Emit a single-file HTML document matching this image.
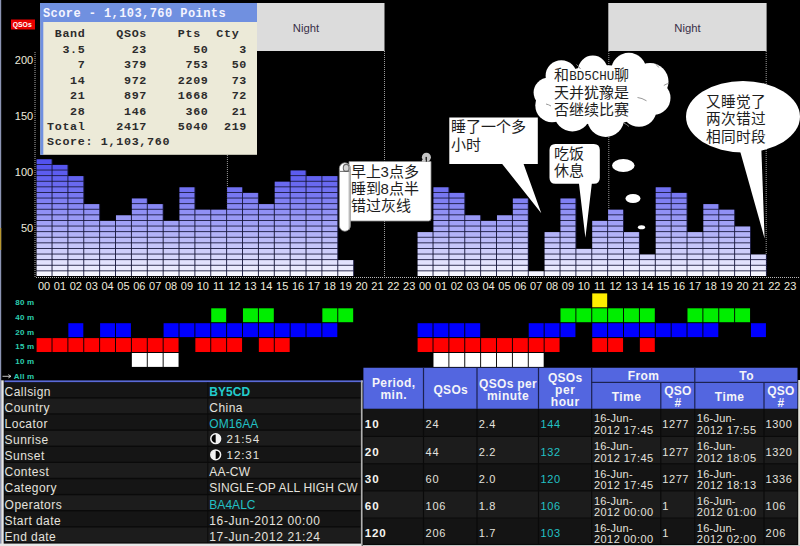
<!DOCTYPE html><html lang="zh-CN"><head><meta charset="utf-8"><style>
html,body{margin:0;padding:0;background:#000;width:800px;height:546px;overflow:hidden}
svg{position:absolute;left:0;top:0;display:block}
text{font-family:"Liberation Sans",sans-serif}
.mono{font-family:"Liberation Mono",monospace}
</style></head><body>
<svg width="800" height="546" viewBox="0 0 800 546">
<rect x="0" y="0" width="800" height="546" fill="#000"/>
<rect x="0" y="0" width="1.2" height="546" fill="#8c94b4"/>
<rect x="0" y="228" width="1.2" height="22" fill="#b89830"/>
<rect x="227" y="3" width="157.5" height="48" fill="#dcdcdc"/>
<rect x="608.3" y="3" width="158.3" height="48" fill="#dcdcdc"/>
<text x="306" y="31.8" font-size="11.3" fill="#3a3048" text-anchor="middle">Night</text>
<text x="687.5" y="31.8" font-size="11.3" fill="#3a3048" text-anchor="middle">Night</text>
<line x1="227.4" y1="51" x2="227.4" y2="277" stroke="#9a9a9a" stroke-width="1" stroke-dasharray="1 1"/>
<line x1="384.5" y1="51" x2="384.5" y2="277" stroke="#9a9a9a" stroke-width="1" stroke-dasharray="1 1"/>
<line x1="608.8" y1="51" x2="608.8" y2="277" stroke="#9a9a9a" stroke-width="1" stroke-dasharray="1 1"/>
<line x1="766.2" y1="51" x2="766.2" y2="277" stroke="#9a9a9a" stroke-width="1" stroke-dasharray="1 1"/>
<rect x="36.60" y="159.30" width="15.88" height="116.70" fill="#1a1a40"/>
<rect x="36.60" y="271.30" width="14.95" height="4.7" fill="#f4f4ff"/>
<rect x="36.60" y="265.70" width="14.95" height="4.7" fill="#eaeafe"/>
<rect x="36.60" y="260.10" width="14.95" height="4.7" fill="#e1e1fd"/>
<rect x="36.60" y="254.50" width="14.95" height="4.7" fill="#d7d7fc"/>
<rect x="36.60" y="248.90" width="14.95" height="4.7" fill="#cecefb"/>
<rect x="36.60" y="243.30" width="14.95" height="4.7" fill="#c5c5fa"/>
<rect x="36.60" y="237.70" width="14.95" height="4.7" fill="#bcbcf9"/>
<rect x="36.60" y="232.10" width="14.95" height="4.7" fill="#b3b3f8"/>
<rect x="36.60" y="226.50" width="14.95" height="4.7" fill="#aaaaf7"/>
<rect x="36.60" y="220.90" width="14.95" height="4.7" fill="#a1a1f6"/>
<rect x="36.60" y="215.30" width="14.95" height="4.7" fill="#9999f5"/>
<rect x="36.60" y="209.70" width="14.95" height="4.7" fill="#9090f5"/>
<rect x="36.60" y="204.10" width="14.95" height="4.7" fill="#8888f4"/>
<rect x="36.60" y="198.50" width="14.95" height="4.7" fill="#8080f3"/>
<rect x="36.60" y="192.90" width="14.95" height="4.7" fill="#7878f2"/>
<rect x="36.60" y="187.30" width="14.95" height="4.7" fill="#7171f1"/>
<rect x="36.60" y="181.70" width="14.95" height="4.7" fill="#6969f0"/>
<rect x="36.60" y="176.10" width="14.95" height="4.7" fill="#6363f0"/>
<rect x="36.60" y="170.50" width="14.95" height="4.7" fill="#5c5cef"/>
<rect x="36.60" y="164.90" width="14.95" height="4.7" fill="#5656ee"/>
<rect x="36.60" y="159.30" width="14.95" height="4.7" fill="#5252ee"/>
<rect x="52.48" y="164.90" width="15.88" height="111.10" fill="#1a1a40"/>
<rect x="52.48" y="271.30" width="14.95" height="4.7" fill="#f4f4ff"/>
<rect x="52.48" y="265.70" width="14.95" height="4.7" fill="#eaeafe"/>
<rect x="52.48" y="260.10" width="14.95" height="4.7" fill="#e1e1fd"/>
<rect x="52.48" y="254.50" width="14.95" height="4.7" fill="#d7d7fc"/>
<rect x="52.48" y="248.90" width="14.95" height="4.7" fill="#cecefb"/>
<rect x="52.48" y="243.30" width="14.95" height="4.7" fill="#c5c5fa"/>
<rect x="52.48" y="237.70" width="14.95" height="4.7" fill="#bcbcf9"/>
<rect x="52.48" y="232.10" width="14.95" height="4.7" fill="#b3b3f8"/>
<rect x="52.48" y="226.50" width="14.95" height="4.7" fill="#aaaaf7"/>
<rect x="52.48" y="220.90" width="14.95" height="4.7" fill="#a1a1f6"/>
<rect x="52.48" y="215.30" width="14.95" height="4.7" fill="#9999f5"/>
<rect x="52.48" y="209.70" width="14.95" height="4.7" fill="#9090f5"/>
<rect x="52.48" y="204.10" width="14.95" height="4.7" fill="#8888f4"/>
<rect x="52.48" y="198.50" width="14.95" height="4.7" fill="#8080f3"/>
<rect x="52.48" y="192.90" width="14.95" height="4.7" fill="#7878f2"/>
<rect x="52.48" y="187.30" width="14.95" height="4.7" fill="#7171f1"/>
<rect x="52.48" y="181.70" width="14.95" height="4.7" fill="#6969f0"/>
<rect x="52.48" y="176.10" width="14.95" height="4.7" fill="#6363f0"/>
<rect x="52.48" y="170.50" width="14.95" height="4.7" fill="#5c5cef"/>
<rect x="52.48" y="164.90" width="14.95" height="4.7" fill="#5656ee"/>
<rect x="68.35" y="176.10" width="15.88" height="99.90" fill="#1a1a40"/>
<rect x="68.35" y="271.30" width="14.95" height="4.7" fill="#f4f4ff"/>
<rect x="68.35" y="265.70" width="14.95" height="4.7" fill="#eaeafe"/>
<rect x="68.35" y="260.10" width="14.95" height="4.7" fill="#e1e1fd"/>
<rect x="68.35" y="254.50" width="14.95" height="4.7" fill="#d7d7fc"/>
<rect x="68.35" y="248.90" width="14.95" height="4.7" fill="#cecefb"/>
<rect x="68.35" y="243.30" width="14.95" height="4.7" fill="#c5c5fa"/>
<rect x="68.35" y="237.70" width="14.95" height="4.7" fill="#bcbcf9"/>
<rect x="68.35" y="232.10" width="14.95" height="4.7" fill="#b3b3f8"/>
<rect x="68.35" y="226.50" width="14.95" height="4.7" fill="#aaaaf7"/>
<rect x="68.35" y="220.90" width="14.95" height="4.7" fill="#a1a1f6"/>
<rect x="68.35" y="215.30" width="14.95" height="4.7" fill="#9999f5"/>
<rect x="68.35" y="209.70" width="14.95" height="4.7" fill="#9090f5"/>
<rect x="68.35" y="204.10" width="14.95" height="4.7" fill="#8888f4"/>
<rect x="68.35" y="198.50" width="14.95" height="4.7" fill="#8080f3"/>
<rect x="68.35" y="192.90" width="14.95" height="4.7" fill="#7878f2"/>
<rect x="68.35" y="187.30" width="14.95" height="4.7" fill="#7171f1"/>
<rect x="68.35" y="181.70" width="14.95" height="4.7" fill="#6969f0"/>
<rect x="68.35" y="176.10" width="14.95" height="4.7" fill="#6363f0"/>
<rect x="84.22" y="204.10" width="15.88" height="71.90" fill="#1a1a40"/>
<rect x="84.22" y="271.30" width="14.95" height="4.7" fill="#f4f4ff"/>
<rect x="84.22" y="265.70" width="14.95" height="4.7" fill="#eaeafe"/>
<rect x="84.22" y="260.10" width="14.95" height="4.7" fill="#e1e1fd"/>
<rect x="84.22" y="254.50" width="14.95" height="4.7" fill="#d7d7fc"/>
<rect x="84.22" y="248.90" width="14.95" height="4.7" fill="#cecefb"/>
<rect x="84.22" y="243.30" width="14.95" height="4.7" fill="#c5c5fa"/>
<rect x="84.22" y="237.70" width="14.95" height="4.7" fill="#bcbcf9"/>
<rect x="84.22" y="232.10" width="14.95" height="4.7" fill="#b3b3f8"/>
<rect x="84.22" y="226.50" width="14.95" height="4.7" fill="#aaaaf7"/>
<rect x="84.22" y="220.90" width="14.95" height="4.7" fill="#a1a1f6"/>
<rect x="84.22" y="215.30" width="14.95" height="4.7" fill="#9999f5"/>
<rect x="84.22" y="209.70" width="14.95" height="4.7" fill="#9090f5"/>
<rect x="84.22" y="204.10" width="14.95" height="4.7" fill="#8888f4"/>
<rect x="100.10" y="220.90" width="15.88" height="55.10" fill="#1a1a40"/>
<rect x="100.10" y="271.30" width="14.95" height="4.7" fill="#f4f4ff"/>
<rect x="100.10" y="265.70" width="14.95" height="4.7" fill="#eaeafe"/>
<rect x="100.10" y="260.10" width="14.95" height="4.7" fill="#e1e1fd"/>
<rect x="100.10" y="254.50" width="14.95" height="4.7" fill="#d7d7fc"/>
<rect x="100.10" y="248.90" width="14.95" height="4.7" fill="#cecefb"/>
<rect x="100.10" y="243.30" width="14.95" height="4.7" fill="#c5c5fa"/>
<rect x="100.10" y="237.70" width="14.95" height="4.7" fill="#bcbcf9"/>
<rect x="100.10" y="232.10" width="14.95" height="4.7" fill="#b3b3f8"/>
<rect x="100.10" y="226.50" width="14.95" height="4.7" fill="#aaaaf7"/>
<rect x="100.10" y="220.90" width="14.95" height="4.7" fill="#a1a1f6"/>
<rect x="115.97" y="215.30" width="15.88" height="60.70" fill="#1a1a40"/>
<rect x="115.97" y="271.30" width="14.95" height="4.7" fill="#f4f4ff"/>
<rect x="115.97" y="265.70" width="14.95" height="4.7" fill="#eaeafe"/>
<rect x="115.97" y="260.10" width="14.95" height="4.7" fill="#e1e1fd"/>
<rect x="115.97" y="254.50" width="14.95" height="4.7" fill="#d7d7fc"/>
<rect x="115.97" y="248.90" width="14.95" height="4.7" fill="#cecefb"/>
<rect x="115.97" y="243.30" width="14.95" height="4.7" fill="#c5c5fa"/>
<rect x="115.97" y="237.70" width="14.95" height="4.7" fill="#bcbcf9"/>
<rect x="115.97" y="232.10" width="14.95" height="4.7" fill="#b3b3f8"/>
<rect x="115.97" y="226.50" width="14.95" height="4.7" fill="#aaaaf7"/>
<rect x="115.97" y="220.90" width="14.95" height="4.7" fill="#a1a1f6"/>
<rect x="115.97" y="215.30" width="14.95" height="4.7" fill="#9999f5"/>
<rect x="131.85" y="198.50" width="15.88" height="77.50" fill="#1a1a40"/>
<rect x="131.85" y="271.30" width="14.95" height="4.7" fill="#f4f4ff"/>
<rect x="131.85" y="265.70" width="14.95" height="4.7" fill="#eaeafe"/>
<rect x="131.85" y="260.10" width="14.95" height="4.7" fill="#e1e1fd"/>
<rect x="131.85" y="254.50" width="14.95" height="4.7" fill="#d7d7fc"/>
<rect x="131.85" y="248.90" width="14.95" height="4.7" fill="#cecefb"/>
<rect x="131.85" y="243.30" width="14.95" height="4.7" fill="#c5c5fa"/>
<rect x="131.85" y="237.70" width="14.95" height="4.7" fill="#bcbcf9"/>
<rect x="131.85" y="232.10" width="14.95" height="4.7" fill="#b3b3f8"/>
<rect x="131.85" y="226.50" width="14.95" height="4.7" fill="#aaaaf7"/>
<rect x="131.85" y="220.90" width="14.95" height="4.7" fill="#a1a1f6"/>
<rect x="131.85" y="215.30" width="14.95" height="4.7" fill="#9999f5"/>
<rect x="131.85" y="209.70" width="14.95" height="4.7" fill="#9090f5"/>
<rect x="131.85" y="204.10" width="14.95" height="4.7" fill="#8888f4"/>
<rect x="131.85" y="198.50" width="14.95" height="4.7" fill="#8080f3"/>
<rect x="147.72" y="204.10" width="15.88" height="71.90" fill="#1a1a40"/>
<rect x="147.72" y="271.30" width="14.95" height="4.7" fill="#f4f4ff"/>
<rect x="147.72" y="265.70" width="14.95" height="4.7" fill="#eaeafe"/>
<rect x="147.72" y="260.10" width="14.95" height="4.7" fill="#e1e1fd"/>
<rect x="147.72" y="254.50" width="14.95" height="4.7" fill="#d7d7fc"/>
<rect x="147.72" y="248.90" width="14.95" height="4.7" fill="#cecefb"/>
<rect x="147.72" y="243.30" width="14.95" height="4.7" fill="#c5c5fa"/>
<rect x="147.72" y="237.70" width="14.95" height="4.7" fill="#bcbcf9"/>
<rect x="147.72" y="232.10" width="14.95" height="4.7" fill="#b3b3f8"/>
<rect x="147.72" y="226.50" width="14.95" height="4.7" fill="#aaaaf7"/>
<rect x="147.72" y="220.90" width="14.95" height="4.7" fill="#a1a1f6"/>
<rect x="147.72" y="215.30" width="14.95" height="4.7" fill="#9999f5"/>
<rect x="147.72" y="209.70" width="14.95" height="4.7" fill="#9090f5"/>
<rect x="147.72" y="204.10" width="14.95" height="4.7" fill="#8888f4"/>
<rect x="163.60" y="220.90" width="15.88" height="55.10" fill="#1a1a40"/>
<rect x="163.60" y="271.30" width="14.95" height="4.7" fill="#f4f4ff"/>
<rect x="163.60" y="265.70" width="14.95" height="4.7" fill="#eaeafe"/>
<rect x="163.60" y="260.10" width="14.95" height="4.7" fill="#e1e1fd"/>
<rect x="163.60" y="254.50" width="14.95" height="4.7" fill="#d7d7fc"/>
<rect x="163.60" y="248.90" width="14.95" height="4.7" fill="#cecefb"/>
<rect x="163.60" y="243.30" width="14.95" height="4.7" fill="#c5c5fa"/>
<rect x="163.60" y="237.70" width="14.95" height="4.7" fill="#bcbcf9"/>
<rect x="163.60" y="232.10" width="14.95" height="4.7" fill="#b3b3f8"/>
<rect x="163.60" y="226.50" width="14.95" height="4.7" fill="#aaaaf7"/>
<rect x="163.60" y="220.90" width="14.95" height="4.7" fill="#a1a1f6"/>
<rect x="179.47" y="187.30" width="15.88" height="88.70" fill="#1a1a40"/>
<rect x="179.47" y="271.30" width="14.95" height="4.7" fill="#f4f4ff"/>
<rect x="179.47" y="265.70" width="14.95" height="4.7" fill="#eaeafe"/>
<rect x="179.47" y="260.10" width="14.95" height="4.7" fill="#e1e1fd"/>
<rect x="179.47" y="254.50" width="14.95" height="4.7" fill="#d7d7fc"/>
<rect x="179.47" y="248.90" width="14.95" height="4.7" fill="#cecefb"/>
<rect x="179.47" y="243.30" width="14.95" height="4.7" fill="#c5c5fa"/>
<rect x="179.47" y="237.70" width="14.95" height="4.7" fill="#bcbcf9"/>
<rect x="179.47" y="232.10" width="14.95" height="4.7" fill="#b3b3f8"/>
<rect x="179.47" y="226.50" width="14.95" height="4.7" fill="#aaaaf7"/>
<rect x="179.47" y="220.90" width="14.95" height="4.7" fill="#a1a1f6"/>
<rect x="179.47" y="215.30" width="14.95" height="4.7" fill="#9999f5"/>
<rect x="179.47" y="209.70" width="14.95" height="4.7" fill="#9090f5"/>
<rect x="179.47" y="204.10" width="14.95" height="4.7" fill="#8888f4"/>
<rect x="179.47" y="198.50" width="14.95" height="4.7" fill="#8080f3"/>
<rect x="179.47" y="192.90" width="14.95" height="4.7" fill="#7878f2"/>
<rect x="179.47" y="187.30" width="14.95" height="4.7" fill="#7171f1"/>
<rect x="195.35" y="209.70" width="15.88" height="66.30" fill="#1a1a40"/>
<rect x="195.35" y="271.30" width="14.95" height="4.7" fill="#f4f4ff"/>
<rect x="195.35" y="265.70" width="14.95" height="4.7" fill="#eaeafe"/>
<rect x="195.35" y="260.10" width="14.95" height="4.7" fill="#e1e1fd"/>
<rect x="195.35" y="254.50" width="14.95" height="4.7" fill="#d7d7fc"/>
<rect x="195.35" y="248.90" width="14.95" height="4.7" fill="#cecefb"/>
<rect x="195.35" y="243.30" width="14.95" height="4.7" fill="#c5c5fa"/>
<rect x="195.35" y="237.70" width="14.95" height="4.7" fill="#bcbcf9"/>
<rect x="195.35" y="232.10" width="14.95" height="4.7" fill="#b3b3f8"/>
<rect x="195.35" y="226.50" width="14.95" height="4.7" fill="#aaaaf7"/>
<rect x="195.35" y="220.90" width="14.95" height="4.7" fill="#a1a1f6"/>
<rect x="195.35" y="215.30" width="14.95" height="4.7" fill="#9999f5"/>
<rect x="195.35" y="209.70" width="14.95" height="4.7" fill="#9090f5"/>
<rect x="211.22" y="209.70" width="15.88" height="66.30" fill="#1a1a40"/>
<rect x="211.22" y="271.30" width="14.95" height="4.7" fill="#f4f4ff"/>
<rect x="211.22" y="265.70" width="14.95" height="4.7" fill="#eaeafe"/>
<rect x="211.22" y="260.10" width="14.95" height="4.7" fill="#e1e1fd"/>
<rect x="211.22" y="254.50" width="14.95" height="4.7" fill="#d7d7fc"/>
<rect x="211.22" y="248.90" width="14.95" height="4.7" fill="#cecefb"/>
<rect x="211.22" y="243.30" width="14.95" height="4.7" fill="#c5c5fa"/>
<rect x="211.22" y="237.70" width="14.95" height="4.7" fill="#bcbcf9"/>
<rect x="211.22" y="232.10" width="14.95" height="4.7" fill="#b3b3f8"/>
<rect x="211.22" y="226.50" width="14.95" height="4.7" fill="#aaaaf7"/>
<rect x="211.22" y="220.90" width="14.95" height="4.7" fill="#a1a1f6"/>
<rect x="211.22" y="215.30" width="14.95" height="4.7" fill="#9999f5"/>
<rect x="211.22" y="209.70" width="14.95" height="4.7" fill="#9090f5"/>
<rect x="227.10" y="187.30" width="15.88" height="88.70" fill="#1a1a40"/>
<rect x="227.10" y="271.30" width="14.95" height="4.7" fill="#f4f4ff"/>
<rect x="227.10" y="265.70" width="14.95" height="4.7" fill="#eaeafe"/>
<rect x="227.10" y="260.10" width="14.95" height="4.7" fill="#e1e1fd"/>
<rect x="227.10" y="254.50" width="14.95" height="4.7" fill="#d7d7fc"/>
<rect x="227.10" y="248.90" width="14.95" height="4.7" fill="#cecefb"/>
<rect x="227.10" y="243.30" width="14.95" height="4.7" fill="#c5c5fa"/>
<rect x="227.10" y="237.70" width="14.95" height="4.7" fill="#bcbcf9"/>
<rect x="227.10" y="232.10" width="14.95" height="4.7" fill="#b3b3f8"/>
<rect x="227.10" y="226.50" width="14.95" height="4.7" fill="#aaaaf7"/>
<rect x="227.10" y="220.90" width="14.95" height="4.7" fill="#a1a1f6"/>
<rect x="227.10" y="215.30" width="14.95" height="4.7" fill="#9999f5"/>
<rect x="227.10" y="209.70" width="14.95" height="4.7" fill="#9090f5"/>
<rect x="227.10" y="204.10" width="14.95" height="4.7" fill="#8888f4"/>
<rect x="227.10" y="198.50" width="14.95" height="4.7" fill="#8080f3"/>
<rect x="227.10" y="192.90" width="14.95" height="4.7" fill="#7878f2"/>
<rect x="227.10" y="187.30" width="14.95" height="4.7" fill="#7171f1"/>
<rect x="242.97" y="192.90" width="15.88" height="83.10" fill="#1a1a40"/>
<rect x="242.97" y="271.30" width="14.95" height="4.7" fill="#f4f4ff"/>
<rect x="242.97" y="265.70" width="14.95" height="4.7" fill="#eaeafe"/>
<rect x="242.97" y="260.10" width="14.95" height="4.7" fill="#e1e1fd"/>
<rect x="242.97" y="254.50" width="14.95" height="4.7" fill="#d7d7fc"/>
<rect x="242.97" y="248.90" width="14.95" height="4.7" fill="#cecefb"/>
<rect x="242.97" y="243.30" width="14.95" height="4.7" fill="#c5c5fa"/>
<rect x="242.97" y="237.70" width="14.95" height="4.7" fill="#bcbcf9"/>
<rect x="242.97" y="232.10" width="14.95" height="4.7" fill="#b3b3f8"/>
<rect x="242.97" y="226.50" width="14.95" height="4.7" fill="#aaaaf7"/>
<rect x="242.97" y="220.90" width="14.95" height="4.7" fill="#a1a1f6"/>
<rect x="242.97" y="215.30" width="14.95" height="4.7" fill="#9999f5"/>
<rect x="242.97" y="209.70" width="14.95" height="4.7" fill="#9090f5"/>
<rect x="242.97" y="204.10" width="14.95" height="4.7" fill="#8888f4"/>
<rect x="242.97" y="198.50" width="14.95" height="4.7" fill="#8080f3"/>
<rect x="242.97" y="192.90" width="14.95" height="4.7" fill="#7878f2"/>
<rect x="258.85" y="204.10" width="15.88" height="71.90" fill="#1a1a40"/>
<rect x="258.85" y="271.30" width="14.95" height="4.7" fill="#f4f4ff"/>
<rect x="258.85" y="265.70" width="14.95" height="4.7" fill="#eaeafe"/>
<rect x="258.85" y="260.10" width="14.95" height="4.7" fill="#e1e1fd"/>
<rect x="258.85" y="254.50" width="14.95" height="4.7" fill="#d7d7fc"/>
<rect x="258.85" y="248.90" width="14.95" height="4.7" fill="#cecefb"/>
<rect x="258.85" y="243.30" width="14.95" height="4.7" fill="#c5c5fa"/>
<rect x="258.85" y="237.70" width="14.95" height="4.7" fill="#bcbcf9"/>
<rect x="258.85" y="232.10" width="14.95" height="4.7" fill="#b3b3f8"/>
<rect x="258.85" y="226.50" width="14.95" height="4.7" fill="#aaaaf7"/>
<rect x="258.85" y="220.90" width="14.95" height="4.7" fill="#a1a1f6"/>
<rect x="258.85" y="215.30" width="14.95" height="4.7" fill="#9999f5"/>
<rect x="258.85" y="209.70" width="14.95" height="4.7" fill="#9090f5"/>
<rect x="258.85" y="204.10" width="14.95" height="4.7" fill="#8888f4"/>
<rect x="274.73" y="181.70" width="15.88" height="94.30" fill="#1a1a40"/>
<rect x="274.73" y="271.30" width="14.95" height="4.7" fill="#f4f4ff"/>
<rect x="274.73" y="265.70" width="14.95" height="4.7" fill="#eaeafe"/>
<rect x="274.73" y="260.10" width="14.95" height="4.7" fill="#e1e1fd"/>
<rect x="274.73" y="254.50" width="14.95" height="4.7" fill="#d7d7fc"/>
<rect x="274.73" y="248.90" width="14.95" height="4.7" fill="#cecefb"/>
<rect x="274.73" y="243.30" width="14.95" height="4.7" fill="#c5c5fa"/>
<rect x="274.73" y="237.70" width="14.95" height="4.7" fill="#bcbcf9"/>
<rect x="274.73" y="232.10" width="14.95" height="4.7" fill="#b3b3f8"/>
<rect x="274.73" y="226.50" width="14.95" height="4.7" fill="#aaaaf7"/>
<rect x="274.73" y="220.90" width="14.95" height="4.7" fill="#a1a1f6"/>
<rect x="274.73" y="215.30" width="14.95" height="4.7" fill="#9999f5"/>
<rect x="274.73" y="209.70" width="14.95" height="4.7" fill="#9090f5"/>
<rect x="274.73" y="204.10" width="14.95" height="4.7" fill="#8888f4"/>
<rect x="274.73" y="198.50" width="14.95" height="4.7" fill="#8080f3"/>
<rect x="274.73" y="192.90" width="14.95" height="4.7" fill="#7878f2"/>
<rect x="274.73" y="187.30" width="14.95" height="4.7" fill="#7171f1"/>
<rect x="274.73" y="181.70" width="14.95" height="4.7" fill="#6969f0"/>
<rect x="290.60" y="170.50" width="15.88" height="105.50" fill="#1a1a40"/>
<rect x="290.60" y="271.30" width="14.95" height="4.7" fill="#f4f4ff"/>
<rect x="290.60" y="265.70" width="14.95" height="4.7" fill="#eaeafe"/>
<rect x="290.60" y="260.10" width="14.95" height="4.7" fill="#e1e1fd"/>
<rect x="290.60" y="254.50" width="14.95" height="4.7" fill="#d7d7fc"/>
<rect x="290.60" y="248.90" width="14.95" height="4.7" fill="#cecefb"/>
<rect x="290.60" y="243.30" width="14.95" height="4.7" fill="#c5c5fa"/>
<rect x="290.60" y="237.70" width="14.95" height="4.7" fill="#bcbcf9"/>
<rect x="290.60" y="232.10" width="14.95" height="4.7" fill="#b3b3f8"/>
<rect x="290.60" y="226.50" width="14.95" height="4.7" fill="#aaaaf7"/>
<rect x="290.60" y="220.90" width="14.95" height="4.7" fill="#a1a1f6"/>
<rect x="290.60" y="215.30" width="14.95" height="4.7" fill="#9999f5"/>
<rect x="290.60" y="209.70" width="14.95" height="4.7" fill="#9090f5"/>
<rect x="290.60" y="204.10" width="14.95" height="4.7" fill="#8888f4"/>
<rect x="290.60" y="198.50" width="14.95" height="4.7" fill="#8080f3"/>
<rect x="290.60" y="192.90" width="14.95" height="4.7" fill="#7878f2"/>
<rect x="290.60" y="187.30" width="14.95" height="4.7" fill="#7171f1"/>
<rect x="290.60" y="181.70" width="14.95" height="4.7" fill="#6969f0"/>
<rect x="290.60" y="176.10" width="14.95" height="4.7" fill="#6363f0"/>
<rect x="290.60" y="170.50" width="14.95" height="4.7" fill="#5c5cef"/>
<rect x="306.48" y="176.10" width="15.88" height="99.90" fill="#1a1a40"/>
<rect x="306.48" y="271.30" width="14.95" height="4.7" fill="#f4f4ff"/>
<rect x="306.48" y="265.70" width="14.95" height="4.7" fill="#eaeafe"/>
<rect x="306.48" y="260.10" width="14.95" height="4.7" fill="#e1e1fd"/>
<rect x="306.48" y="254.50" width="14.95" height="4.7" fill="#d7d7fc"/>
<rect x="306.48" y="248.90" width="14.95" height="4.7" fill="#cecefb"/>
<rect x="306.48" y="243.30" width="14.95" height="4.7" fill="#c5c5fa"/>
<rect x="306.48" y="237.70" width="14.95" height="4.7" fill="#bcbcf9"/>
<rect x="306.48" y="232.10" width="14.95" height="4.7" fill="#b3b3f8"/>
<rect x="306.48" y="226.50" width="14.95" height="4.7" fill="#aaaaf7"/>
<rect x="306.48" y="220.90" width="14.95" height="4.7" fill="#a1a1f6"/>
<rect x="306.48" y="215.30" width="14.95" height="4.7" fill="#9999f5"/>
<rect x="306.48" y="209.70" width="14.95" height="4.7" fill="#9090f5"/>
<rect x="306.48" y="204.10" width="14.95" height="4.7" fill="#8888f4"/>
<rect x="306.48" y="198.50" width="14.95" height="4.7" fill="#8080f3"/>
<rect x="306.48" y="192.90" width="14.95" height="4.7" fill="#7878f2"/>
<rect x="306.48" y="187.30" width="14.95" height="4.7" fill="#7171f1"/>
<rect x="306.48" y="181.70" width="14.95" height="4.7" fill="#6969f0"/>
<rect x="306.48" y="176.10" width="14.95" height="4.7" fill="#6363f0"/>
<rect x="322.35" y="176.10" width="15.88" height="99.90" fill="#1a1a40"/>
<rect x="322.35" y="271.30" width="14.95" height="4.7" fill="#f4f4ff"/>
<rect x="322.35" y="265.70" width="14.95" height="4.7" fill="#eaeafe"/>
<rect x="322.35" y="260.10" width="14.95" height="4.7" fill="#e1e1fd"/>
<rect x="322.35" y="254.50" width="14.95" height="4.7" fill="#d7d7fc"/>
<rect x="322.35" y="248.90" width="14.95" height="4.7" fill="#cecefb"/>
<rect x="322.35" y="243.30" width="14.95" height="4.7" fill="#c5c5fa"/>
<rect x="322.35" y="237.70" width="14.95" height="4.7" fill="#bcbcf9"/>
<rect x="322.35" y="232.10" width="14.95" height="4.7" fill="#b3b3f8"/>
<rect x="322.35" y="226.50" width="14.95" height="4.7" fill="#aaaaf7"/>
<rect x="322.35" y="220.90" width="14.95" height="4.7" fill="#a1a1f6"/>
<rect x="322.35" y="215.30" width="14.95" height="4.7" fill="#9999f5"/>
<rect x="322.35" y="209.70" width="14.95" height="4.7" fill="#9090f5"/>
<rect x="322.35" y="204.10" width="14.95" height="4.7" fill="#8888f4"/>
<rect x="322.35" y="198.50" width="14.95" height="4.7" fill="#8080f3"/>
<rect x="322.35" y="192.90" width="14.95" height="4.7" fill="#7878f2"/>
<rect x="322.35" y="187.30" width="14.95" height="4.7" fill="#7171f1"/>
<rect x="322.35" y="181.70" width="14.95" height="4.7" fill="#6969f0"/>
<rect x="322.35" y="176.10" width="14.95" height="4.7" fill="#6363f0"/>
<rect x="338.23" y="260.10" width="15.88" height="15.90" fill="#1a1a40"/>
<rect x="338.23" y="271.30" width="14.95" height="4.7" fill="#f4f4ff"/>
<rect x="338.23" y="265.70" width="14.95" height="4.7" fill="#eaeafe"/>
<rect x="338.23" y="260.10" width="14.95" height="4.7" fill="#e1e1fd"/>
<rect x="417.60" y="232.10" width="15.88" height="43.90" fill="#1a1a40"/>
<rect x="417.60" y="271.30" width="14.95" height="4.7" fill="#f4f4ff"/>
<rect x="417.60" y="265.70" width="14.95" height="4.7" fill="#eaeafe"/>
<rect x="417.60" y="260.10" width="14.95" height="4.7" fill="#e1e1fd"/>
<rect x="417.60" y="254.50" width="14.95" height="4.7" fill="#d7d7fc"/>
<rect x="417.60" y="248.90" width="14.95" height="4.7" fill="#cecefb"/>
<rect x="417.60" y="243.30" width="14.95" height="4.7" fill="#c5c5fa"/>
<rect x="417.60" y="237.70" width="14.95" height="4.7" fill="#bcbcf9"/>
<rect x="417.60" y="232.10" width="14.95" height="4.7" fill="#b3b3f8"/>
<rect x="433.48" y="187.30" width="15.88" height="88.70" fill="#1a1a40"/>
<rect x="433.48" y="271.30" width="14.95" height="4.7" fill="#f4f4ff"/>
<rect x="433.48" y="265.70" width="14.95" height="4.7" fill="#eaeafe"/>
<rect x="433.48" y="260.10" width="14.95" height="4.7" fill="#e1e1fd"/>
<rect x="433.48" y="254.50" width="14.95" height="4.7" fill="#d7d7fc"/>
<rect x="433.48" y="248.90" width="14.95" height="4.7" fill="#cecefb"/>
<rect x="433.48" y="243.30" width="14.95" height="4.7" fill="#c5c5fa"/>
<rect x="433.48" y="237.70" width="14.95" height="4.7" fill="#bcbcf9"/>
<rect x="433.48" y="232.10" width="14.95" height="4.7" fill="#b3b3f8"/>
<rect x="433.48" y="226.50" width="14.95" height="4.7" fill="#aaaaf7"/>
<rect x="433.48" y="220.90" width="14.95" height="4.7" fill="#a1a1f6"/>
<rect x="433.48" y="215.30" width="14.95" height="4.7" fill="#9999f5"/>
<rect x="433.48" y="209.70" width="14.95" height="4.7" fill="#9090f5"/>
<rect x="433.48" y="204.10" width="14.95" height="4.7" fill="#8888f4"/>
<rect x="433.48" y="198.50" width="14.95" height="4.7" fill="#8080f3"/>
<rect x="433.48" y="192.90" width="14.95" height="4.7" fill="#7878f2"/>
<rect x="433.48" y="187.30" width="14.95" height="4.7" fill="#7171f1"/>
<rect x="449.35" y="192.90" width="15.88" height="83.10" fill="#1a1a40"/>
<rect x="449.35" y="271.30" width="14.95" height="4.7" fill="#f4f4ff"/>
<rect x="449.35" y="265.70" width="14.95" height="4.7" fill="#eaeafe"/>
<rect x="449.35" y="260.10" width="14.95" height="4.7" fill="#e1e1fd"/>
<rect x="449.35" y="254.50" width="14.95" height="4.7" fill="#d7d7fc"/>
<rect x="449.35" y="248.90" width="14.95" height="4.7" fill="#cecefb"/>
<rect x="449.35" y="243.30" width="14.95" height="4.7" fill="#c5c5fa"/>
<rect x="449.35" y="237.70" width="14.95" height="4.7" fill="#bcbcf9"/>
<rect x="449.35" y="232.10" width="14.95" height="4.7" fill="#b3b3f8"/>
<rect x="449.35" y="226.50" width="14.95" height="4.7" fill="#aaaaf7"/>
<rect x="449.35" y="220.90" width="14.95" height="4.7" fill="#a1a1f6"/>
<rect x="449.35" y="215.30" width="14.95" height="4.7" fill="#9999f5"/>
<rect x="449.35" y="209.70" width="14.95" height="4.7" fill="#9090f5"/>
<rect x="449.35" y="204.10" width="14.95" height="4.7" fill="#8888f4"/>
<rect x="449.35" y="198.50" width="14.95" height="4.7" fill="#8080f3"/>
<rect x="449.35" y="192.90" width="14.95" height="4.7" fill="#7878f2"/>
<rect x="465.23" y="215.30" width="15.88" height="60.70" fill="#1a1a40"/>
<rect x="465.23" y="271.30" width="14.95" height="4.7" fill="#f4f4ff"/>
<rect x="465.23" y="265.70" width="14.95" height="4.7" fill="#eaeafe"/>
<rect x="465.23" y="260.10" width="14.95" height="4.7" fill="#e1e1fd"/>
<rect x="465.23" y="254.50" width="14.95" height="4.7" fill="#d7d7fc"/>
<rect x="465.23" y="248.90" width="14.95" height="4.7" fill="#cecefb"/>
<rect x="465.23" y="243.30" width="14.95" height="4.7" fill="#c5c5fa"/>
<rect x="465.23" y="237.70" width="14.95" height="4.7" fill="#bcbcf9"/>
<rect x="465.23" y="232.10" width="14.95" height="4.7" fill="#b3b3f8"/>
<rect x="465.23" y="226.50" width="14.95" height="4.7" fill="#aaaaf7"/>
<rect x="465.23" y="220.90" width="14.95" height="4.7" fill="#a1a1f6"/>
<rect x="465.23" y="215.30" width="14.95" height="4.7" fill="#9999f5"/>
<rect x="481.10" y="220.90" width="15.88" height="55.10" fill="#1a1a40"/>
<rect x="481.10" y="271.30" width="14.95" height="4.7" fill="#f4f4ff"/>
<rect x="481.10" y="265.70" width="14.95" height="4.7" fill="#eaeafe"/>
<rect x="481.10" y="260.10" width="14.95" height="4.7" fill="#e1e1fd"/>
<rect x="481.10" y="254.50" width="14.95" height="4.7" fill="#d7d7fc"/>
<rect x="481.10" y="248.90" width="14.95" height="4.7" fill="#cecefb"/>
<rect x="481.10" y="243.30" width="14.95" height="4.7" fill="#c5c5fa"/>
<rect x="481.10" y="237.70" width="14.95" height="4.7" fill="#bcbcf9"/>
<rect x="481.10" y="232.10" width="14.95" height="4.7" fill="#b3b3f8"/>
<rect x="481.10" y="226.50" width="14.95" height="4.7" fill="#aaaaf7"/>
<rect x="481.10" y="220.90" width="14.95" height="4.7" fill="#a1a1f6"/>
<rect x="496.98" y="215.30" width="15.88" height="60.70" fill="#1a1a40"/>
<rect x="496.98" y="271.30" width="14.95" height="4.7" fill="#f4f4ff"/>
<rect x="496.98" y="265.70" width="14.95" height="4.7" fill="#eaeafe"/>
<rect x="496.98" y="260.10" width="14.95" height="4.7" fill="#e1e1fd"/>
<rect x="496.98" y="254.50" width="14.95" height="4.7" fill="#d7d7fc"/>
<rect x="496.98" y="248.90" width="14.95" height="4.7" fill="#cecefb"/>
<rect x="496.98" y="243.30" width="14.95" height="4.7" fill="#c5c5fa"/>
<rect x="496.98" y="237.70" width="14.95" height="4.7" fill="#bcbcf9"/>
<rect x="496.98" y="232.10" width="14.95" height="4.7" fill="#b3b3f8"/>
<rect x="496.98" y="226.50" width="14.95" height="4.7" fill="#aaaaf7"/>
<rect x="496.98" y="220.90" width="14.95" height="4.7" fill="#a1a1f6"/>
<rect x="496.98" y="215.30" width="14.95" height="4.7" fill="#9999f5"/>
<rect x="512.85" y="198.50" width="15.88" height="77.50" fill="#1a1a40"/>
<rect x="512.85" y="271.30" width="14.95" height="4.7" fill="#f4f4ff"/>
<rect x="512.85" y="265.70" width="14.95" height="4.7" fill="#eaeafe"/>
<rect x="512.85" y="260.10" width="14.95" height="4.7" fill="#e1e1fd"/>
<rect x="512.85" y="254.50" width="14.95" height="4.7" fill="#d7d7fc"/>
<rect x="512.85" y="248.90" width="14.95" height="4.7" fill="#cecefb"/>
<rect x="512.85" y="243.30" width="14.95" height="4.7" fill="#c5c5fa"/>
<rect x="512.85" y="237.70" width="14.95" height="4.7" fill="#bcbcf9"/>
<rect x="512.85" y="232.10" width="14.95" height="4.7" fill="#b3b3f8"/>
<rect x="512.85" y="226.50" width="14.95" height="4.7" fill="#aaaaf7"/>
<rect x="512.85" y="220.90" width="14.95" height="4.7" fill="#a1a1f6"/>
<rect x="512.85" y="215.30" width="14.95" height="4.7" fill="#9999f5"/>
<rect x="512.85" y="209.70" width="14.95" height="4.7" fill="#9090f5"/>
<rect x="512.85" y="204.10" width="14.95" height="4.7" fill="#8888f4"/>
<rect x="512.85" y="198.50" width="14.95" height="4.7" fill="#8080f3"/>
<rect x="528.73" y="271.30" width="15.88" height="4.70" fill="#1a1a40"/>
<rect x="528.73" y="271.30" width="14.95" height="4.7" fill="#f4f4ff"/>
<rect x="544.60" y="232.10" width="15.88" height="43.90" fill="#1a1a40"/>
<rect x="544.60" y="271.30" width="14.95" height="4.7" fill="#f4f4ff"/>
<rect x="544.60" y="265.70" width="14.95" height="4.7" fill="#eaeafe"/>
<rect x="544.60" y="260.10" width="14.95" height="4.7" fill="#e1e1fd"/>
<rect x="544.60" y="254.50" width="14.95" height="4.7" fill="#d7d7fc"/>
<rect x="544.60" y="248.90" width="14.95" height="4.7" fill="#cecefb"/>
<rect x="544.60" y="243.30" width="14.95" height="4.7" fill="#c5c5fa"/>
<rect x="544.60" y="237.70" width="14.95" height="4.7" fill="#bcbcf9"/>
<rect x="544.60" y="232.10" width="14.95" height="4.7" fill="#b3b3f8"/>
<rect x="560.48" y="198.50" width="15.88" height="77.50" fill="#1a1a40"/>
<rect x="560.48" y="271.30" width="14.95" height="4.7" fill="#f4f4ff"/>
<rect x="560.48" y="265.70" width="14.95" height="4.7" fill="#eaeafe"/>
<rect x="560.48" y="260.10" width="14.95" height="4.7" fill="#e1e1fd"/>
<rect x="560.48" y="254.50" width="14.95" height="4.7" fill="#d7d7fc"/>
<rect x="560.48" y="248.90" width="14.95" height="4.7" fill="#cecefb"/>
<rect x="560.48" y="243.30" width="14.95" height="4.7" fill="#c5c5fa"/>
<rect x="560.48" y="237.70" width="14.95" height="4.7" fill="#bcbcf9"/>
<rect x="560.48" y="232.10" width="14.95" height="4.7" fill="#b3b3f8"/>
<rect x="560.48" y="226.50" width="14.95" height="4.7" fill="#aaaaf7"/>
<rect x="560.48" y="220.90" width="14.95" height="4.7" fill="#a1a1f6"/>
<rect x="560.48" y="215.30" width="14.95" height="4.7" fill="#9999f5"/>
<rect x="560.48" y="209.70" width="14.95" height="4.7" fill="#9090f5"/>
<rect x="560.48" y="204.10" width="14.95" height="4.7" fill="#8888f4"/>
<rect x="560.48" y="198.50" width="14.95" height="4.7" fill="#8080f3"/>
<rect x="576.35" y="248.90" width="15.88" height="27.10" fill="#1a1a40"/>
<rect x="576.35" y="271.30" width="14.95" height="4.7" fill="#f4f4ff"/>
<rect x="576.35" y="265.70" width="14.95" height="4.7" fill="#eaeafe"/>
<rect x="576.35" y="260.10" width="14.95" height="4.7" fill="#e1e1fd"/>
<rect x="576.35" y="254.50" width="14.95" height="4.7" fill="#d7d7fc"/>
<rect x="576.35" y="248.90" width="14.95" height="4.7" fill="#cecefb"/>
<rect x="592.23" y="220.90" width="15.88" height="55.10" fill="#1a1a40"/>
<rect x="592.23" y="271.30" width="14.95" height="4.7" fill="#f4f4ff"/>
<rect x="592.23" y="265.70" width="14.95" height="4.7" fill="#eaeafe"/>
<rect x="592.23" y="260.10" width="14.95" height="4.7" fill="#e1e1fd"/>
<rect x="592.23" y="254.50" width="14.95" height="4.7" fill="#d7d7fc"/>
<rect x="592.23" y="248.90" width="14.95" height="4.7" fill="#cecefb"/>
<rect x="592.23" y="243.30" width="14.95" height="4.7" fill="#c5c5fa"/>
<rect x="592.23" y="237.70" width="14.95" height="4.7" fill="#bcbcf9"/>
<rect x="592.23" y="232.10" width="14.95" height="4.7" fill="#b3b3f8"/>
<rect x="592.23" y="226.50" width="14.95" height="4.7" fill="#aaaaf7"/>
<rect x="592.23" y="220.90" width="14.95" height="4.7" fill="#a1a1f6"/>
<rect x="608.10" y="209.70" width="15.88" height="66.30" fill="#1a1a40"/>
<rect x="608.10" y="271.30" width="14.95" height="4.7" fill="#f4f4ff"/>
<rect x="608.10" y="265.70" width="14.95" height="4.7" fill="#eaeafe"/>
<rect x="608.10" y="260.10" width="14.95" height="4.7" fill="#e1e1fd"/>
<rect x="608.10" y="254.50" width="14.95" height="4.7" fill="#d7d7fc"/>
<rect x="608.10" y="248.90" width="14.95" height="4.7" fill="#cecefb"/>
<rect x="608.10" y="243.30" width="14.95" height="4.7" fill="#c5c5fa"/>
<rect x="608.10" y="237.70" width="14.95" height="4.7" fill="#bcbcf9"/>
<rect x="608.10" y="232.10" width="14.95" height="4.7" fill="#b3b3f8"/>
<rect x="608.10" y="226.50" width="14.95" height="4.7" fill="#aaaaf7"/>
<rect x="608.10" y="220.90" width="14.95" height="4.7" fill="#a1a1f6"/>
<rect x="608.10" y="215.30" width="14.95" height="4.7" fill="#9999f5"/>
<rect x="608.10" y="209.70" width="14.95" height="4.7" fill="#9090f5"/>
<rect x="623.98" y="232.10" width="15.88" height="43.90" fill="#1a1a40"/>
<rect x="623.98" y="271.30" width="14.95" height="4.7" fill="#f4f4ff"/>
<rect x="623.98" y="265.70" width="14.95" height="4.7" fill="#eaeafe"/>
<rect x="623.98" y="260.10" width="14.95" height="4.7" fill="#e1e1fd"/>
<rect x="623.98" y="254.50" width="14.95" height="4.7" fill="#d7d7fc"/>
<rect x="623.98" y="248.90" width="14.95" height="4.7" fill="#cecefb"/>
<rect x="623.98" y="243.30" width="14.95" height="4.7" fill="#c5c5fa"/>
<rect x="623.98" y="237.70" width="14.95" height="4.7" fill="#bcbcf9"/>
<rect x="623.98" y="232.10" width="14.95" height="4.7" fill="#b3b3f8"/>
<rect x="639.85" y="254.50" width="15.88" height="21.50" fill="#1a1a40"/>
<rect x="639.85" y="271.30" width="14.95" height="4.7" fill="#f4f4ff"/>
<rect x="639.85" y="265.70" width="14.95" height="4.7" fill="#eaeafe"/>
<rect x="639.85" y="260.10" width="14.95" height="4.7" fill="#e1e1fd"/>
<rect x="639.85" y="254.50" width="14.95" height="4.7" fill="#d7d7fc"/>
<rect x="655.73" y="187.30" width="15.88" height="88.70" fill="#1a1a40"/>
<rect x="655.73" y="271.30" width="14.95" height="4.7" fill="#f4f4ff"/>
<rect x="655.73" y="265.70" width="14.95" height="4.7" fill="#eaeafe"/>
<rect x="655.73" y="260.10" width="14.95" height="4.7" fill="#e1e1fd"/>
<rect x="655.73" y="254.50" width="14.95" height="4.7" fill="#d7d7fc"/>
<rect x="655.73" y="248.90" width="14.95" height="4.7" fill="#cecefb"/>
<rect x="655.73" y="243.30" width="14.95" height="4.7" fill="#c5c5fa"/>
<rect x="655.73" y="237.70" width="14.95" height="4.7" fill="#bcbcf9"/>
<rect x="655.73" y="232.10" width="14.95" height="4.7" fill="#b3b3f8"/>
<rect x="655.73" y="226.50" width="14.95" height="4.7" fill="#aaaaf7"/>
<rect x="655.73" y="220.90" width="14.95" height="4.7" fill="#a1a1f6"/>
<rect x="655.73" y="215.30" width="14.95" height="4.7" fill="#9999f5"/>
<rect x="655.73" y="209.70" width="14.95" height="4.7" fill="#9090f5"/>
<rect x="655.73" y="204.10" width="14.95" height="4.7" fill="#8888f4"/>
<rect x="655.73" y="198.50" width="14.95" height="4.7" fill="#8080f3"/>
<rect x="655.73" y="192.90" width="14.95" height="4.7" fill="#7878f2"/>
<rect x="655.73" y="187.30" width="14.95" height="4.7" fill="#7171f1"/>
<rect x="671.60" y="192.90" width="15.88" height="83.10" fill="#1a1a40"/>
<rect x="671.60" y="271.30" width="14.95" height="4.7" fill="#f4f4ff"/>
<rect x="671.60" y="265.70" width="14.95" height="4.7" fill="#eaeafe"/>
<rect x="671.60" y="260.10" width="14.95" height="4.7" fill="#e1e1fd"/>
<rect x="671.60" y="254.50" width="14.95" height="4.7" fill="#d7d7fc"/>
<rect x="671.60" y="248.90" width="14.95" height="4.7" fill="#cecefb"/>
<rect x="671.60" y="243.30" width="14.95" height="4.7" fill="#c5c5fa"/>
<rect x="671.60" y="237.70" width="14.95" height="4.7" fill="#bcbcf9"/>
<rect x="671.60" y="232.10" width="14.95" height="4.7" fill="#b3b3f8"/>
<rect x="671.60" y="226.50" width="14.95" height="4.7" fill="#aaaaf7"/>
<rect x="671.60" y="220.90" width="14.95" height="4.7" fill="#a1a1f6"/>
<rect x="671.60" y="215.30" width="14.95" height="4.7" fill="#9999f5"/>
<rect x="671.60" y="209.70" width="14.95" height="4.7" fill="#9090f5"/>
<rect x="671.60" y="204.10" width="14.95" height="4.7" fill="#8888f4"/>
<rect x="671.60" y="198.50" width="14.95" height="4.7" fill="#8080f3"/>
<rect x="671.60" y="192.90" width="14.95" height="4.7" fill="#7878f2"/>
<rect x="687.48" y="232.10" width="15.88" height="43.90" fill="#1a1a40"/>
<rect x="687.48" y="271.30" width="14.95" height="4.7" fill="#f4f4ff"/>
<rect x="687.48" y="265.70" width="14.95" height="4.7" fill="#eaeafe"/>
<rect x="687.48" y="260.10" width="14.95" height="4.7" fill="#e1e1fd"/>
<rect x="687.48" y="254.50" width="14.95" height="4.7" fill="#d7d7fc"/>
<rect x="687.48" y="248.90" width="14.95" height="4.7" fill="#cecefb"/>
<rect x="687.48" y="243.30" width="14.95" height="4.7" fill="#c5c5fa"/>
<rect x="687.48" y="237.70" width="14.95" height="4.7" fill="#bcbcf9"/>
<rect x="687.48" y="232.10" width="14.95" height="4.7" fill="#b3b3f8"/>
<rect x="703.35" y="204.10" width="15.88" height="71.90" fill="#1a1a40"/>
<rect x="703.35" y="271.30" width="14.95" height="4.7" fill="#f4f4ff"/>
<rect x="703.35" y="265.70" width="14.95" height="4.7" fill="#eaeafe"/>
<rect x="703.35" y="260.10" width="14.95" height="4.7" fill="#e1e1fd"/>
<rect x="703.35" y="254.50" width="14.95" height="4.7" fill="#d7d7fc"/>
<rect x="703.35" y="248.90" width="14.95" height="4.7" fill="#cecefb"/>
<rect x="703.35" y="243.30" width="14.95" height="4.7" fill="#c5c5fa"/>
<rect x="703.35" y="237.70" width="14.95" height="4.7" fill="#bcbcf9"/>
<rect x="703.35" y="232.10" width="14.95" height="4.7" fill="#b3b3f8"/>
<rect x="703.35" y="226.50" width="14.95" height="4.7" fill="#aaaaf7"/>
<rect x="703.35" y="220.90" width="14.95" height="4.7" fill="#a1a1f6"/>
<rect x="703.35" y="215.30" width="14.95" height="4.7" fill="#9999f5"/>
<rect x="703.35" y="209.70" width="14.95" height="4.7" fill="#9090f5"/>
<rect x="703.35" y="204.10" width="14.95" height="4.7" fill="#8888f4"/>
<rect x="719.23" y="209.70" width="15.88" height="66.30" fill="#1a1a40"/>
<rect x="719.23" y="271.30" width="14.95" height="4.7" fill="#f4f4ff"/>
<rect x="719.23" y="265.70" width="14.95" height="4.7" fill="#eaeafe"/>
<rect x="719.23" y="260.10" width="14.95" height="4.7" fill="#e1e1fd"/>
<rect x="719.23" y="254.50" width="14.95" height="4.7" fill="#d7d7fc"/>
<rect x="719.23" y="248.90" width="14.95" height="4.7" fill="#cecefb"/>
<rect x="719.23" y="243.30" width="14.95" height="4.7" fill="#c5c5fa"/>
<rect x="719.23" y="237.70" width="14.95" height="4.7" fill="#bcbcf9"/>
<rect x="719.23" y="232.10" width="14.95" height="4.7" fill="#b3b3f8"/>
<rect x="719.23" y="226.50" width="14.95" height="4.7" fill="#aaaaf7"/>
<rect x="719.23" y="220.90" width="14.95" height="4.7" fill="#a1a1f6"/>
<rect x="719.23" y="215.30" width="14.95" height="4.7" fill="#9999f5"/>
<rect x="719.23" y="209.70" width="14.95" height="4.7" fill="#9090f5"/>
<rect x="735.10" y="226.50" width="15.88" height="49.50" fill="#1a1a40"/>
<rect x="735.10" y="271.30" width="14.95" height="4.7" fill="#f4f4ff"/>
<rect x="735.10" y="265.70" width="14.95" height="4.7" fill="#eaeafe"/>
<rect x="735.10" y="260.10" width="14.95" height="4.7" fill="#e1e1fd"/>
<rect x="735.10" y="254.50" width="14.95" height="4.7" fill="#d7d7fc"/>
<rect x="735.10" y="248.90" width="14.95" height="4.7" fill="#cecefb"/>
<rect x="735.10" y="243.30" width="14.95" height="4.7" fill="#c5c5fa"/>
<rect x="735.10" y="237.70" width="14.95" height="4.7" fill="#bcbcf9"/>
<rect x="735.10" y="232.10" width="14.95" height="4.7" fill="#b3b3f8"/>
<rect x="735.10" y="226.50" width="14.95" height="4.7" fill="#aaaaf7"/>
<rect x="750.98" y="254.50" width="15.88" height="21.50" fill="#1a1a40"/>
<rect x="750.98" y="271.30" width="14.95" height="4.7" fill="#f4f4ff"/>
<rect x="750.98" y="265.70" width="14.95" height="4.7" fill="#eaeafe"/>
<rect x="750.98" y="260.10" width="14.95" height="4.7" fill="#e1e1fd"/>
<rect x="750.98" y="254.50" width="14.95" height="4.7" fill="#d7d7fc"/>
<line x1="36" y1="277.5" x2="800" y2="277.5" stroke="#b8b8b8" stroke-width="1" stroke-dasharray="1 1"/>
<line x1="35" y1="52" x2="35" y2="277" stroke="#6c6c6c" stroke-width="1.6" stroke-dasharray="1 1"/>
<text x="33.2" y="63.7" font-size="11" fill="#eeeadc" text-anchor="end">200</text>
<text x="33.2" y="119.7" font-size="11" fill="#eeeadc" text-anchor="end">150</text>
<text x="33.2" y="175.6" font-size="11" fill="#eeeadc" text-anchor="end">100</text>
<text x="33.2" y="231.6" font-size="11" fill="#eeeadc" text-anchor="end">50</text>
<text x="44.08" y="290" font-size="11" fill="#eeeadc" text-anchor="middle">00</text>
<text x="59.95" y="290" font-size="11" fill="#eeeadc" text-anchor="middle">01</text>
<text x="75.82" y="290" font-size="11" fill="#eeeadc" text-anchor="middle">02</text>
<text x="91.70" y="290" font-size="11" fill="#eeeadc" text-anchor="middle">03</text>
<text x="107.57" y="290" font-size="11" fill="#eeeadc" text-anchor="middle">04</text>
<text x="123.45" y="290" font-size="11" fill="#eeeadc" text-anchor="middle">05</text>
<text x="139.32" y="290" font-size="11" fill="#eeeadc" text-anchor="middle">06</text>
<text x="155.20" y="290" font-size="11" fill="#eeeadc" text-anchor="middle">07</text>
<text x="171.07" y="290" font-size="11" fill="#eeeadc" text-anchor="middle">08</text>
<text x="186.95" y="290" font-size="11" fill="#eeeadc" text-anchor="middle">09</text>
<text x="202.82" y="290" font-size="11" fill="#eeeadc" text-anchor="middle">10</text>
<text x="218.70" y="290" font-size="11" fill="#eeeadc" text-anchor="middle">11</text>
<text x="234.57" y="290" font-size="11" fill="#eeeadc" text-anchor="middle">12</text>
<text x="250.45" y="290" font-size="11" fill="#eeeadc" text-anchor="middle">13</text>
<text x="266.33" y="290" font-size="11" fill="#eeeadc" text-anchor="middle">14</text>
<text x="282.20" y="290" font-size="11" fill="#eeeadc" text-anchor="middle">15</text>
<text x="298.08" y="290" font-size="11" fill="#eeeadc" text-anchor="middle">16</text>
<text x="313.95" y="290" font-size="11" fill="#eeeadc" text-anchor="middle">17</text>
<text x="329.83" y="290" font-size="11" fill="#eeeadc" text-anchor="middle">18</text>
<text x="345.70" y="290" font-size="11" fill="#eeeadc" text-anchor="middle">19</text>
<text x="361.58" y="290" font-size="11" fill="#eeeadc" text-anchor="middle">20</text>
<text x="377.45" y="290" font-size="11" fill="#eeeadc" text-anchor="middle">21</text>
<text x="393.33" y="290" font-size="11" fill="#eeeadc" text-anchor="middle">22</text>
<text x="409.20" y="290" font-size="11" fill="#eeeadc" text-anchor="middle">23</text>
<text x="425.08" y="290" font-size="11" fill="#eeeadc" text-anchor="middle">00</text>
<text x="440.95" y="290" font-size="11" fill="#eeeadc" text-anchor="middle">01</text>
<text x="456.83" y="290" font-size="11" fill="#eeeadc" text-anchor="middle">02</text>
<text x="472.70" y="290" font-size="11" fill="#eeeadc" text-anchor="middle">03</text>
<text x="488.58" y="290" font-size="11" fill="#eeeadc" text-anchor="middle">04</text>
<text x="504.45" y="290" font-size="11" fill="#eeeadc" text-anchor="middle">05</text>
<text x="520.33" y="290" font-size="11" fill="#eeeadc" text-anchor="middle">06</text>
<text x="536.20" y="290" font-size="11" fill="#eeeadc" text-anchor="middle">07</text>
<text x="552.08" y="290" font-size="11" fill="#eeeadc" text-anchor="middle">08</text>
<text x="567.95" y="290" font-size="11" fill="#eeeadc" text-anchor="middle">09</text>
<text x="583.83" y="290" font-size="11" fill="#eeeadc" text-anchor="middle">10</text>
<text x="599.70" y="290" font-size="11" fill="#eeeadc" text-anchor="middle">11</text>
<text x="615.58" y="290" font-size="11" fill="#eeeadc" text-anchor="middle">12</text>
<text x="631.45" y="290" font-size="11" fill="#eeeadc" text-anchor="middle">13</text>
<text x="647.33" y="290" font-size="11" fill="#eeeadc" text-anchor="middle">14</text>
<text x="663.20" y="290" font-size="11" fill="#eeeadc" text-anchor="middle">15</text>
<text x="679.08" y="290" font-size="11" fill="#eeeadc" text-anchor="middle">16</text>
<text x="694.95" y="290" font-size="11" fill="#eeeadc" text-anchor="middle">17</text>
<text x="710.83" y="290" font-size="11" fill="#eeeadc" text-anchor="middle">18</text>
<text x="726.70" y="290" font-size="11" fill="#eeeadc" text-anchor="middle">19</text>
<text x="742.58" y="290" font-size="11" fill="#eeeadc" text-anchor="middle">20</text>
<text x="758.45" y="290" font-size="11" fill="#eeeadc" text-anchor="middle">21</text>
<text x="774.33" y="290" font-size="11" fill="#eeeadc" text-anchor="middle">22</text>
<text x="790.20" y="290" font-size="11" fill="#eeeadc" text-anchor="middle">23</text>
<rect x="11" y="19.5" width="24" height="10" fill="#e80000"/>
<text x="22.2" y="27.4" font-size="7" font-weight="bold" fill="#fff" text-anchor="middle" textLength="19" lengthAdjust="spacingAndGlyphs">QSOs</text>
<rect x="592.23" y="293.40" width="14.95" height="13.9" fill="#ffee00"/>
<rect x="211.22" y="308.30" width="14.95" height="13.9" fill="#00ee00"/>
<rect x="242.97" y="308.30" width="14.95" height="13.9" fill="#00ee00"/>
<rect x="258.85" y="308.30" width="14.95" height="13.9" fill="#00ee00"/>
<rect x="322.35" y="308.30" width="14.95" height="13.9" fill="#00ee00"/>
<rect x="338.23" y="308.30" width="14.95" height="13.9" fill="#00ee00"/>
<rect x="560.48" y="308.30" width="14.95" height="13.9" fill="#00ee00"/>
<rect x="576.35" y="308.30" width="14.95" height="13.9" fill="#00ee00"/>
<rect x="592.23" y="308.30" width="14.95" height="13.9" fill="#00ee00"/>
<rect x="608.10" y="308.30" width="14.95" height="13.9" fill="#00ee00"/>
<rect x="623.98" y="308.30" width="14.95" height="13.9" fill="#00ee00"/>
<rect x="639.85" y="308.30" width="14.95" height="13.9" fill="#00ee00"/>
<rect x="687.48" y="308.30" width="14.95" height="13.9" fill="#00ee00"/>
<rect x="703.35" y="308.30" width="14.95" height="13.9" fill="#00ee00"/>
<rect x="719.23" y="308.30" width="14.95" height="13.9" fill="#00ee00"/>
<rect x="735.10" y="308.30" width="14.95" height="13.9" fill="#00ee00"/>
<rect x="68.35" y="323.20" width="14.95" height="13.9" fill="#0000ff"/>
<rect x="100.10" y="323.20" width="14.95" height="13.9" fill="#0000ff"/>
<rect x="115.97" y="323.20" width="14.95" height="13.9" fill="#0000ff"/>
<rect x="163.60" y="323.20" width="14.95" height="13.9" fill="#0000ff"/>
<rect x="179.47" y="323.20" width="14.95" height="13.9" fill="#0000ff"/>
<rect x="195.35" y="323.20" width="14.95" height="13.9" fill="#0000ff"/>
<rect x="211.22" y="323.20" width="14.95" height="13.9" fill="#0000ff"/>
<rect x="227.10" y="323.20" width="14.95" height="13.9" fill="#0000ff"/>
<rect x="242.97" y="323.20" width="14.95" height="13.9" fill="#0000ff"/>
<rect x="258.85" y="323.20" width="14.95" height="13.9" fill="#0000ff"/>
<rect x="274.73" y="323.20" width="14.95" height="13.9" fill="#0000ff"/>
<rect x="290.60" y="323.20" width="14.95" height="13.9" fill="#0000ff"/>
<rect x="306.48" y="323.20" width="14.95" height="13.9" fill="#0000ff"/>
<rect x="322.35" y="323.20" width="14.95" height="13.9" fill="#0000ff"/>
<rect x="417.60" y="323.20" width="14.95" height="13.9" fill="#0000ff"/>
<rect x="433.48" y="323.20" width="14.95" height="13.9" fill="#0000ff"/>
<rect x="449.35" y="323.20" width="14.95" height="13.9" fill="#0000ff"/>
<rect x="465.23" y="323.20" width="14.95" height="13.9" fill="#0000ff"/>
<rect x="528.73" y="323.20" width="14.95" height="13.9" fill="#0000ff"/>
<rect x="544.60" y="323.20" width="14.95" height="13.9" fill="#0000ff"/>
<rect x="560.48" y="323.20" width="14.95" height="13.9" fill="#0000ff"/>
<rect x="592.23" y="323.20" width="14.95" height="13.9" fill="#0000ff"/>
<rect x="608.10" y="323.20" width="14.95" height="13.9" fill="#0000ff"/>
<rect x="623.98" y="323.20" width="14.95" height="13.9" fill="#0000ff"/>
<rect x="639.85" y="323.20" width="14.95" height="13.9" fill="#0000ff"/>
<rect x="655.73" y="323.20" width="14.95" height="13.9" fill="#0000ff"/>
<rect x="671.60" y="323.20" width="14.95" height="13.9" fill="#0000ff"/>
<rect x="687.48" y="323.20" width="14.95" height="13.9" fill="#0000ff"/>
<rect x="703.35" y="323.20" width="14.95" height="13.9" fill="#0000ff"/>
<rect x="750.98" y="323.20" width="14.95" height="13.9" fill="#0000ff"/>
<rect x="36.60" y="338.10" width="14.95" height="13.9" fill="#ff0000"/>
<rect x="52.48" y="338.10" width="14.95" height="13.9" fill="#ff0000"/>
<rect x="68.35" y="338.10" width="14.95" height="13.9" fill="#ff0000"/>
<rect x="84.22" y="338.10" width="14.95" height="13.9" fill="#ff0000"/>
<rect x="100.10" y="338.10" width="14.95" height="13.9" fill="#ff0000"/>
<rect x="115.97" y="338.10" width="14.95" height="13.9" fill="#ff0000"/>
<rect x="131.85" y="338.10" width="14.95" height="13.9" fill="#ff0000"/>
<rect x="147.72" y="338.10" width="14.95" height="13.9" fill="#ff0000"/>
<rect x="163.60" y="338.10" width="14.95" height="13.9" fill="#ff0000"/>
<rect x="195.35" y="338.10" width="14.95" height="13.9" fill="#ff0000"/>
<rect x="211.22" y="338.10" width="14.95" height="13.9" fill="#ff0000"/>
<rect x="227.10" y="338.10" width="14.95" height="13.9" fill="#ff0000"/>
<rect x="258.85" y="338.10" width="14.95" height="13.9" fill="#ff0000"/>
<rect x="274.73" y="338.10" width="14.95" height="13.9" fill="#ff0000"/>
<rect x="417.60" y="338.10" width="14.95" height="13.9" fill="#ff0000"/>
<rect x="433.48" y="338.10" width="14.95" height="13.9" fill="#ff0000"/>
<rect x="449.35" y="338.10" width="14.95" height="13.9" fill="#ff0000"/>
<rect x="465.23" y="338.10" width="14.95" height="13.9" fill="#ff0000"/>
<rect x="481.10" y="338.10" width="14.95" height="13.9" fill="#ff0000"/>
<rect x="496.98" y="338.10" width="14.95" height="13.9" fill="#ff0000"/>
<rect x="512.85" y="338.10" width="14.95" height="13.9" fill="#ff0000"/>
<rect x="528.73" y="338.10" width="14.95" height="13.9" fill="#ff0000"/>
<rect x="544.60" y="338.10" width="14.95" height="13.9" fill="#ff0000"/>
<rect x="592.23" y="338.10" width="14.95" height="13.9" fill="#ff0000"/>
<rect x="608.10" y="338.10" width="14.95" height="13.9" fill="#ff0000"/>
<rect x="639.85" y="338.10" width="14.95" height="13.9" fill="#ff0000"/>
<rect x="131.85" y="353.00" width="14.95" height="13.9" fill="#ffffff"/>
<rect x="147.72" y="353.00" width="14.95" height="13.9" fill="#ffffff"/>
<rect x="163.60" y="353.00" width="14.95" height="13.9" fill="#ffffff"/>
<rect x="433.48" y="353.00" width="14.95" height="13.9" fill="#ffffff"/>
<rect x="449.35" y="353.00" width="14.95" height="13.9" fill="#ffffff"/>
<rect x="465.23" y="353.00" width="14.95" height="13.9" fill="#ffffff"/>
<rect x="481.10" y="353.00" width="14.95" height="13.9" fill="#ffffff"/>
<rect x="496.98" y="353.00" width="14.95" height="13.9" fill="#ffffff"/>
<rect x="512.85" y="353.00" width="14.95" height="13.9" fill="#ffffff"/>
<rect x="528.73" y="353.00" width="14.95" height="13.9" fill="#ffffff"/>
<text x="34.3" y="304.7" font-size="8" font-weight="bold" fill="#2ccfb0" text-anchor="end" letter-spacing="0.2">80 m</text>
<text x="34.3" y="319.6" font-size="8" font-weight="bold" fill="#2ccfb0" text-anchor="end" letter-spacing="0.2">40 m</text>
<text x="34.3" y="334.5" font-size="8" font-weight="bold" fill="#2ccfb0" text-anchor="end" letter-spacing="0.2">20 m</text>
<text x="34.3" y="349.4" font-size="8" font-weight="bold" fill="#2ccfb0" text-anchor="end" letter-spacing="0.2">15 m</text>
<text x="34.3" y="364.3" font-size="8" font-weight="bold" fill="#2ccfb0" text-anchor="end" letter-spacing="0.2">10 m</text>
<text x="34.3" y="378.7" font-size="8" font-weight="bold" fill="#2ccfb0" text-anchor="end" letter-spacing="0.2">All m</text>
<line x1="2.5" y1="376.3" x2="10.5" y2="376.3" stroke="#f0f0f0" stroke-width="0.8"/>
<path d="M8.3 374.6 L11 376.3 L8.3 378" fill="none" stroke="#f0f0f0" stroke-width="0.8"/>
<rect x="40.3" y="3" width="216.7" height="151.8" fill="#ecead8"/>
<rect x="40.3" y="3" width="216.7" height="19" fill="#7090e0"/>
<rect x="40.3" y="3" width="3" height="151.8" fill="#7090e0"/>
<text class="mono" x="42.9" y="16.6" font-size="12" letter-spacing="0.43" font-weight="bold" fill="#f4f4ff">Score&#160;-&#160;1,103,760&#160;Points</text>
<text class="mono" x="47.0" y="37.30" font-size="11.7" letter-spacing="0.68" font-weight="bold" fill="#2c2c2c">&#160;Band&#160;&#160;&#160;&#160;QSOs&#160;&#160;&#160;&#160;Pts&#160;&#160;Cty</text>
<text class="mono" x="47.0" y="52.75" font-size="11.7" letter-spacing="0.68" font-weight="bold" fill="#2c2c2c">&#160;&#160;3.5&#160;&#160;&#160;&#160;&#160;&#160;23&#160;&#160;&#160;&#160;&#160;&#160;50&#160;&#160;&#160;&#160;3</text>
<text class="mono" x="47.0" y="68.20" font-size="11.7" letter-spacing="0.68" font-weight="bold" fill="#2c2c2c">&#160;&#160;&#160;&#160;7&#160;&#160;&#160;&#160;&#160;379&#160;&#160;&#160;&#160;&#160;753&#160;&#160;&#160;50</text>
<text class="mono" x="47.0" y="83.65" font-size="11.7" letter-spacing="0.68" font-weight="bold" fill="#2c2c2c">&#160;&#160;&#160;14&#160;&#160;&#160;&#160;&#160;972&#160;&#160;&#160;&#160;2209&#160;&#160;&#160;73</text>
<text class="mono" x="47.0" y="99.10" font-size="11.7" letter-spacing="0.68" font-weight="bold" fill="#2c2c2c">&#160;&#160;&#160;21&#160;&#160;&#160;&#160;&#160;897&#160;&#160;&#160;&#160;1668&#160;&#160;&#160;72</text>
<text class="mono" x="47.0" y="114.55" font-size="11.7" letter-spacing="0.68" font-weight="bold" fill="#2c2c2c">&#160;&#160;&#160;28&#160;&#160;&#160;&#160;&#160;146&#160;&#160;&#160;&#160;&#160;360&#160;&#160;&#160;21</text>
<text class="mono" x="47.0" y="130.00" font-size="11.7" letter-spacing="0.68" font-weight="bold" fill="#2c2c2c">Total&#160;&#160;&#160;&#160;2417&#160;&#160;&#160;&#160;5040&#160;&#160;219</text>
<text class="mono" x="47.0" y="145.45" font-size="11.7" letter-spacing="0.68" font-weight="bold" fill="#2c2c2c">Score:&#160;1,103,760</text>
<path d="M349 161.5 H431 V218.5 Q431 221 428.5 221 H349 Z" fill="#fff" stroke="#8c8c8c" stroke-width="0.8"/>
<rect x="339.4" y="162.8" width="11" height="68.4" rx="5.5" fill="#fff" stroke="#8c8c8c" stroke-width="0.8"/>
<ellipse cx="346.2" cy="167.9" rx="2.9" ry="3.5" fill="#d4d4d4" stroke="#6a6a6a" stroke-width="1.1"/>
<line x1="339.8" y1="171.4" x2="349.4" y2="171.4" stroke="#5a5a5a" stroke-width="0.9"/>
<line x1="349.2" y1="168" x2="349.2" y2="230" stroke="#8a8a8a" stroke-width="0.8"/>
<circle cx="426.4" cy="157.2" r="4.5" fill="#c4c4c4"/>
<rect x="425.6" y="156.9" width="1.2" height="4.8" fill="#000"/>
<rect x="421.9" y="159.9" width="3.7" height="1.9" fill="#c4c4c4"/>
<path d="M449.3 117.6 H537.8 V164 H523.6 L541.3 213.3 L502.2 164 H449.3 Z" fill="#fff"/>
<path d="M555.5 144 H593.8 Q599.8 144 599.8 150 V177.8 Q599.8 183.8 593.8 183.8 H591.8 L585.4 237.8 L579 183.8 H555.5 Q549.5 183.8 549.5 177.8 V150 Q549.5 144 555.5 144 Z" fill="#fff"/>
<circle cx="561.3" cy="75.9" r="15.7" fill="#fff"/>
<circle cx="592.8" cy="70.4" r="14.8" fill="#fff"/>
<circle cx="628.8" cy="70.4" r="17.6" fill="#fff"/>
<circle cx="650.0" cy="81.5" r="18.5" fill="#fff"/>
<circle cx="653.8" cy="98.0" r="16.7" fill="#fff"/>
<circle cx="639.0" cy="109.2" r="17.6" fill="#fff"/>
<circle cx="605.7" cy="118.5" r="18.5" fill="#fff"/>
<circle cx="572.4" cy="112.9" r="18.5" fill="#fff"/>
<circle cx="552.0" cy="105.5" r="16.7" fill="#fff"/>
<circle cx="548.4" cy="92.6" r="14.8" fill="#fff"/>
<ellipse cx="602" cy="95" rx="55" ry="30" fill="#fff"/>
<path d="M637.5 97.5 Q642 98 646.5 100.8" fill="none" stroke="#8c8c8c" stroke-width="0.9"/>
<path d="M623.5 123 Q626.5 124 629 126.5" fill="none" stroke="#8c8c8c" stroke-width="0.9"/>
<path d="M576.5 64.5 Q578.5 66 580.5 69" fill="none" stroke="#8c8c8c" stroke-width="0.9"/>
<path d="M655.5 64 Q657.5 65.5 658.8 67.5" fill="none" stroke="#8c8c8c" stroke-width="0.9"/>
<path d="M663.8 85.5 Q666 84 668.5 83.5" fill="none" stroke="#8c8c8c" stroke-width="0.9"/>
<path d="M546 104 Q548.5 104.5 551 106" fill="none" stroke="#8c8c8c" stroke-width="0.9"/>
<ellipse cx="623.3" cy="165.5" rx="11.3" ry="6.5" fill="#fff"/>
<ellipse cx="633" cy="198.5" rx="7.5" ry="4.5" fill="#fff"/>
<ellipse cx="641.5" cy="227.2" rx="3.6" ry="2" fill="#fff"/>
<ellipse cx="743" cy="116.7" rx="57" ry="35.7" fill="#fff"/>
<path d="M739.2 148 L761.3 148 L764.6 238.5 Z" fill="#fff"/>
<text x="350.6" y="176.6" font-size="15.0" fill="#1e1e1e">早上3点多</text>
<text x="350.6" y="194.0" font-size="15.0" fill="#1e1e1e">睡到8点半</text>
<text x="350.6" y="211.4" font-size="15.0" fill="#1e1e1e">错过灰线</text>
<text x="450.5" y="132.3" font-size="15.0" fill="#1e1e1e">睡了一个多</text>
<text x="450.5" y="149.9" font-size="15.0" fill="#1e1e1e">小时</text>
<text x="553.6" y="158.8" font-size="15.0" fill="#1e1e1e">吃饭</text>
<text x="553.6" y="176.1" font-size="15.0" fill="#1e1e1e">休息</text>
<text x="554.3" y="80.2" font-size="15.0" fill="#1e1e1e">和<tspan class="mono" font-size="12.5">BD5CHU</tspan>聊</text>
<text x="554.3" y="97.5" font-size="15.0" fill="#1e1e1e">天并犹豫是</text>
<text x="554.3" y="114.8" font-size="15.0" fill="#1e1e1e">否继续比赛</text>
<text x="705.5" y="107.0" font-size="14.7" fill="#1e1e1e">又睡觉了</text>
<text x="705.5" y="124.4" font-size="14.7" fill="#1e1e1e">两次错过</text>
<text x="705.5" y="141.8" font-size="14.7" fill="#1e1e1e">相同时段</text>
<rect x="1.2" y="380.3" width="2.5" height="166" fill="#e6e6e6"/>
<rect x="4.4" y="380.4" width="358.6" height="2" fill="#5a6ad8"/>
<rect x="4.4" y="382.40" width="356.5" height="16.12" fill="#151515"/>
<rect x="4.4" y="397.22" width="356.5" height="1.3" fill="#0a0a0a"/>
<rect x="4.4" y="398.52" width="356.5" height="16.12" fill="#1c1c1c"/>
<rect x="4.4" y="413.34" width="356.5" height="1.3" fill="#0a0a0a"/>
<rect x="4.4" y="414.64" width="356.5" height="16.12" fill="#151515"/>
<rect x="4.4" y="429.46" width="356.5" height="1.3" fill="#0a0a0a"/>
<rect x="4.4" y="430.76" width="356.5" height="16.12" fill="#1c1c1c"/>
<rect x="4.4" y="445.58" width="356.5" height="1.3" fill="#0a0a0a"/>
<rect x="4.4" y="446.88" width="356.5" height="16.12" fill="#151515"/>
<rect x="4.4" y="461.70" width="356.5" height="1.3" fill="#0a0a0a"/>
<rect x="4.4" y="463.00" width="356.5" height="16.12" fill="#1c1c1c"/>
<rect x="4.4" y="477.82" width="356.5" height="1.3" fill="#0a0a0a"/>
<rect x="4.4" y="479.12" width="356.5" height="16.12" fill="#151515"/>
<rect x="4.4" y="493.94" width="356.5" height="1.3" fill="#0a0a0a"/>
<rect x="4.4" y="495.24" width="356.5" height="16.12" fill="#1c1c1c"/>
<rect x="4.4" y="510.06" width="356.5" height="1.3" fill="#0a0a0a"/>
<rect x="4.4" y="511.36" width="356.5" height="16.12" fill="#151515"/>
<rect x="4.4" y="526.18" width="356.5" height="1.3" fill="#0a0a0a"/>
<rect x="4.4" y="527.48" width="356.5" height="16.12" fill="#1c1c1c"/>
<rect x="4.4" y="542.30" width="356.5" height="1.3" fill="#0a0a0a"/>
<text x="4.60" y="395.70" font-size="12.00" fill="#e4e2de" textLength="45.94" lengthAdjust="spacing">Callsign</text>
<text x="209.30" y="395.70" font-size="12.00" fill="#22cccc" textLength="40.98" lengthAdjust="spacing" font-weight="bold">BY5CD</text>
<text x="4.60" y="411.82" font-size="12.00" fill="#e4e2de" textLength="44.82" lengthAdjust="spacing">Country</text>
<text x="209.30" y="411.82" font-size="12.00" fill="#e4e2de" textLength="33.25" lengthAdjust="spacing">China</text>
<text x="4.60" y="427.94" font-size="12.00" fill="#e4e2de" textLength="42.83" lengthAdjust="spacing">Locator</text>
<text x="209.30" y="427.94" font-size="12.00" fill="#22c0c4" textLength="49.09" lengthAdjust="spacing">OM16AA</text>
<text x="4.60" y="444.06" font-size="12.00" fill="#e4e2de" textLength="43.49" lengthAdjust="spacing">Sunrise</text>
<circle cx="215.7" cy="438.66" r="4.9" fill="#000" stroke="#f4f4f4" stroke-width="1.5"/>
<path d="M215.7 433.86 A4.8 4.8 0 0 1 215.7 443.46 Z" fill="#f0f0f0"/>
<text x="226.60" y="443.26" font-size="11.60" fill="#e4e2de" textLength="32.50" lengthAdjust="spacing">21:54</text>
<text x="4.60" y="460.18" font-size="12.00" fill="#e4e2de" textLength="39.71" lengthAdjust="spacing">Sunset</text>
<circle cx="215.7" cy="454.78" r="4.9" fill="#000" stroke="#f4f4f4" stroke-width="1.5"/>
<path d="M215.7 449.98 A4.8 4.8 0 0 0 215.7 459.58 Z" fill="#f0f0f0"/>
<text x="226.60" y="459.38" font-size="11.60" fill="#e4e2de" textLength="32.50" lengthAdjust="spacing">12:31</text>
<text x="4.60" y="476.30" font-size="12.00" fill="#e4e2de" textLength="44.16" lengthAdjust="spacing">Contest</text>
<text x="209.30" y="476.30" font-size="12.00" fill="#e4e2de" textLength="40.70" lengthAdjust="spacing">AA-CW</text>
<text x="4.60" y="492.42" font-size="12.00" fill="#e4e2de" textLength="51.94" lengthAdjust="spacing">Category</text>
<text x="209.30" y="492.42" font-size="12.00" fill="#e4e2de" textLength="148.27" lengthAdjust="spacing">SINGLE-OP ALL HIGH CW</text>
<text x="4.60" y="508.54" font-size="12.00" fill="#e4e2de" textLength="57.06" lengthAdjust="spacing">Operators</text>
<text x="209.30" y="508.54" font-size="12.00" fill="#22c0c4" textLength="46.23" lengthAdjust="spacing">BA4ALC</text>
<text x="4.60" y="524.66" font-size="12.00" fill="#e4e2de" textLength="56.03" lengthAdjust="spacing">Start date</text>
<text x="209.30" y="524.66" font-size="12.00" fill="#e4e2de" textLength="110.65" lengthAdjust="spacing">16-Jun-2012 00:00</text>
<text x="4.60" y="540.78" font-size="12.00" fill="#e4e2de" textLength="51.14" lengthAdjust="spacing">End date</text>
<text x="209.30" y="540.78" font-size="12.00" fill="#e4e2de" textLength="110.65" lengthAdjust="spacing">17-Jun-2012 21:24</text>
<rect x="207.3" y="382.4" width="1" height="161.2" fill="#0a0a0a"/>
<rect x="360.9" y="380.4" width="1.7" height="166" fill="#b0b0b0"/>
<rect x="0" y="543.6" width="361" height="3" fill="#e8e8e8"/>
<rect x="363.4" y="367.75" width="434.1" height="41" fill="#5366e0"/>
<rect x="363.4" y="409.00" width="434.1" height="28.00" fill="#141414"/>
<rect x="363.4" y="435.90" width="434.1" height="1.1" fill="#0a0a0a"/>
<rect x="363.4" y="437.00" width="434.1" height="27.30" fill="#1c1c1c"/>
<rect x="363.4" y="463.20" width="434.1" height="1.1" fill="#0a0a0a"/>
<rect x="363.4" y="464.30" width="434.1" height="27.20" fill="#141414"/>
<rect x="363.4" y="490.40" width="434.1" height="1.1" fill="#0a0a0a"/>
<rect x="363.4" y="491.50" width="434.1" height="27.10" fill="#1c1c1c"/>
<rect x="363.4" y="517.50" width="434.1" height="1.1" fill="#0a0a0a"/>
<rect x="363.4" y="518.60" width="434.1" height="26.40" fill="#141414"/>
<rect x="363.4" y="543.90" width="434.1" height="1.1" fill="#0a0a0a"/>
<rect x="422.9" y="367.75" width="1.2" height="41.2" fill="#1c2250"/>
<rect x="422.9" y="409" width="1.2" height="136" fill="#0a0a0a"/>
<rect x="476.4" y="367.75" width="1.2" height="41.2" fill="#1c2250"/>
<rect x="476.4" y="409" width="1.2" height="136" fill="#0a0a0a"/>
<rect x="537.9" y="367.75" width="1.2" height="41.2" fill="#1c2250"/>
<rect x="537.9" y="409" width="1.2" height="136" fill="#0a0a0a"/>
<rect x="591.1" y="367.75" width="1.2" height="41.2" fill="#1c2250"/>
<rect x="591.1" y="409" width="1.2" height="136" fill="#0a0a0a"/>
<rect x="660.2" y="382.2" width="1.2" height="26.8" fill="#1c2250"/>
<rect x="660.2" y="409" width="1.2" height="136" fill="#0a0a0a"/>
<rect x="694.2" y="367.75" width="1.2" height="41.2" fill="#1c2250"/>
<rect x="694.2" y="409" width="1.2" height="136" fill="#0a0a0a"/>
<rect x="763.4" y="382.2" width="1.2" height="26.8" fill="#1c2250"/>
<rect x="763.4" y="409" width="1.2" height="136" fill="#0a0a0a"/>
<rect x="591.1" y="381.8" width="206.4" height="1.2" fill="#1c2250"/>
<rect x="798.2" y="380" width="1.8" height="166" fill="#e4e4dc"/>
<rect x="363" y="545" width="437" height="1" fill="#c8c8c8"/>
<text x="393.50" y="387.30" font-size="12.00" fill="#f4f4f8" textLength="43.08" lengthAdjust="spacing" font-weight="bold" text-anchor="middle">Period,</text>
<text x="393.50" y="399.30" font-size="12.00" fill="#f4f4f8" textLength="26.12" lengthAdjust="spacing" font-weight="bold" text-anchor="middle">min.</text>
<text x="450.60" y="393.80" font-size="12.00" fill="#f4f4f8" textLength="34.20" lengthAdjust="spacing" font-weight="bold" text-anchor="middle">QSOs</text>
<text x="507.80" y="388.40" font-size="12.00" fill="#f4f4f8" textLength="57.65" lengthAdjust="spacing" font-weight="bold" text-anchor="middle">QSOs per</text>
<text x="507.80" y="400.20" font-size="12.00" fill="#f4f4f8" textLength="41.73" lengthAdjust="spacing" font-weight="bold" text-anchor="middle">minute</text>
<text x="565.00" y="381.50" font-size="12.00" fill="#f4f4f8" textLength="34.20" lengthAdjust="spacing" font-weight="bold" text-anchor="middle">QSOs</text>
<text x="565.00" y="393.80" font-size="12.00" fill="#f4f4f8" textLength="19.87" lengthAdjust="spacing" font-weight="bold" text-anchor="middle">per</text>
<text x="565.00" y="405.60" font-size="12.00" fill="#f4f4f8" textLength="28.26" lengthAdjust="spacing" font-weight="bold" text-anchor="middle">hour</text>
<text x="643.30" y="380.30" font-size="12.00" fill="#f4f4f8" textLength="31.35" lengthAdjust="spacing" font-weight="bold" text-anchor="middle">From</text>
<text x="746.40" y="380.30" font-size="12.00" fill="#f4f4f8" textLength="14.32" lengthAdjust="spacing" font-weight="bold" text-anchor="middle">To</text>
<text x="626.30" y="400.80" font-size="12.00" fill="#f4f4f8" textLength="29.14" lengthAdjust="spacing" font-weight="bold" text-anchor="middle">Time</text>
<text x="729.40" y="400.80" font-size="12.00" fill="#f4f4f8" textLength="29.14" lengthAdjust="spacing" font-weight="bold" text-anchor="middle">Time</text>
<text x="677.80" y="394.60" font-size="12.00" fill="#f4f4f8" textLength="27.12" lengthAdjust="spacing" font-weight="bold" text-anchor="middle">QSO</text>
<text x="677.80" y="406.60" font-size="12.00" fill="#f4f4f8" textLength="6.92" lengthAdjust="spacing" font-weight="bold" text-anchor="middle">#</text>
<text x="780.80" y="394.60" font-size="12.00" fill="#f4f4f8" textLength="27.12" lengthAdjust="spacing" font-weight="bold" text-anchor="middle">QSO</text>
<text x="780.80" y="406.60" font-size="12.00" fill="#f4f4f8" textLength="6.92" lengthAdjust="spacing" font-weight="bold" text-anchor="middle">#</text>
<text x="364.80" y="427.80" font-size="11.60" fill="#f6f4f0" textLength="13.90" lengthAdjust="spacing" font-weight="bold">10</text>
<text x="425.60" y="427.80" font-size="11.00" fill="#e4e2de" textLength="13.14" lengthAdjust="spacing">24</text>
<text x="478.80" y="427.80" font-size="11.00" fill="#e4e2de" textLength="16.49" lengthAdjust="spacing">2.4</text>
<text x="540.40" y="427.80" font-size="11.00" fill="#22c0c4" textLength="19.70" lengthAdjust="spacing">144</text>
<text x="593.90" y="422.20" font-size="11.00" fill="#e4e2de" textLength="38.70" lengthAdjust="spacing">16-Jun-</text>
<text x="593.90" y="433.70" font-size="11.00" fill="#e4e2de" textLength="59.25" lengthAdjust="spacing">2012 17:45</text>
<text x="662.20" y="427.80" font-size="11.00" fill="#e4e2de" textLength="26.27" lengthAdjust="spacing">1277</text>
<text x="696.80" y="422.20" font-size="11.00" fill="#e4e2de" textLength="38.70" lengthAdjust="spacing">16-Jun-</text>
<text x="696.80" y="433.70" font-size="11.00" fill="#e4e2de" textLength="59.25" lengthAdjust="spacing">2012 17:55</text>
<text x="765.60" y="427.80" font-size="11.00" fill="#e4e2de" textLength="26.27" lengthAdjust="spacing">1300</text>
<text x="364.80" y="455.80" font-size="11.60" fill="#f6f4f0" textLength="13.90" lengthAdjust="spacing" font-weight="bold">20</text>
<text x="425.60" y="455.80" font-size="11.00" fill="#e4e2de" textLength="13.14" lengthAdjust="spacing">44</text>
<text x="478.80" y="455.80" font-size="11.00" fill="#e4e2de" textLength="16.49" lengthAdjust="spacing">2.2</text>
<text x="540.40" y="455.80" font-size="11.00" fill="#22c0c4" textLength="19.70" lengthAdjust="spacing">132</text>
<text x="593.90" y="450.20" font-size="11.00" fill="#e4e2de" textLength="38.70" lengthAdjust="spacing">16-Jun-</text>
<text x="593.90" y="461.70" font-size="11.00" fill="#e4e2de" textLength="59.25" lengthAdjust="spacing">2012 17:45</text>
<text x="662.20" y="455.80" font-size="11.00" fill="#e4e2de" textLength="26.27" lengthAdjust="spacing">1277</text>
<text x="696.80" y="450.20" font-size="11.00" fill="#e4e2de" textLength="38.70" lengthAdjust="spacing">16-Jun-</text>
<text x="696.80" y="461.70" font-size="11.00" fill="#e4e2de" textLength="59.25" lengthAdjust="spacing">2012 18:05</text>
<text x="765.60" y="455.80" font-size="11.00" fill="#e4e2de" textLength="26.27" lengthAdjust="spacing">1320</text>
<text x="364.80" y="483.10" font-size="11.60" fill="#f6f4f0" textLength="13.90" lengthAdjust="spacing" font-weight="bold">30</text>
<text x="425.60" y="483.10" font-size="11.00" fill="#e4e2de" textLength="13.14" lengthAdjust="spacing">60</text>
<text x="478.80" y="483.10" font-size="11.00" fill="#e4e2de" textLength="16.49" lengthAdjust="spacing">2.0</text>
<text x="540.40" y="483.10" font-size="11.00" fill="#22c0c4" textLength="19.70" lengthAdjust="spacing">120</text>
<text x="593.90" y="477.50" font-size="11.00" fill="#e4e2de" textLength="38.70" lengthAdjust="spacing">16-Jun-</text>
<text x="593.90" y="489.00" font-size="11.00" fill="#e4e2de" textLength="59.25" lengthAdjust="spacing">2012 17:45</text>
<text x="662.20" y="483.10" font-size="11.00" fill="#e4e2de" textLength="26.27" lengthAdjust="spacing">1277</text>
<text x="696.80" y="477.50" font-size="11.00" fill="#e4e2de" textLength="38.70" lengthAdjust="spacing">16-Jun-</text>
<text x="696.80" y="489.00" font-size="11.00" fill="#e4e2de" textLength="59.25" lengthAdjust="spacing">2012 18:13</text>
<text x="765.60" y="483.10" font-size="11.00" fill="#e4e2de" textLength="26.27" lengthAdjust="spacing">1336</text>
<text x="364.80" y="510.30" font-size="11.60" fill="#f6f4f0" textLength="13.90" lengthAdjust="spacing" font-weight="bold">60</text>
<text x="425.60" y="510.30" font-size="11.00" fill="#e4e2de" textLength="19.70" lengthAdjust="spacing">106</text>
<text x="478.80" y="510.30" font-size="11.00" fill="#e4e2de" textLength="16.49" lengthAdjust="spacing">1.8</text>
<text x="540.40" y="510.30" font-size="11.00" fill="#22c0c4" textLength="19.70" lengthAdjust="spacing">106</text>
<text x="593.90" y="504.70" font-size="11.00" fill="#e4e2de" textLength="38.70" lengthAdjust="spacing">16-Jun-</text>
<text x="593.90" y="516.20" font-size="11.00" fill="#e4e2de" textLength="59.25" lengthAdjust="spacing">2012 00:00</text>
<text x="662.20" y="510.30" font-size="11.00" fill="#e4e2de" textLength="6.57" lengthAdjust="spacing">1</text>
<text x="696.80" y="504.70" font-size="11.00" fill="#e4e2de" textLength="38.70" lengthAdjust="spacing">16-Jun-</text>
<text x="696.80" y="516.20" font-size="11.00" fill="#e4e2de" textLength="59.25" lengthAdjust="spacing">2012 01:00</text>
<text x="765.60" y="510.30" font-size="11.00" fill="#e4e2de" textLength="19.70" lengthAdjust="spacing">106</text>
<text x="364.80" y="537.40" font-size="11.60" fill="#f6f4f0" textLength="20.85" lengthAdjust="spacing" font-weight="bold">120</text>
<text x="425.60" y="537.40" font-size="11.00" fill="#e4e2de" textLength="19.70" lengthAdjust="spacing">206</text>
<text x="478.80" y="537.40" font-size="11.00" fill="#e4e2de" textLength="16.49" lengthAdjust="spacing">1.7</text>
<text x="540.40" y="537.40" font-size="11.00" fill="#22c0c4" textLength="19.70" lengthAdjust="spacing">103</text>
<text x="593.90" y="531.80" font-size="11.00" fill="#e4e2de" textLength="38.70" lengthAdjust="spacing">16-Jun-</text>
<text x="593.90" y="543.30" font-size="11.00" fill="#e4e2de" textLength="59.25" lengthAdjust="spacing">2012 00:00</text>
<text x="662.20" y="537.40" font-size="11.00" fill="#e4e2de" textLength="6.57" lengthAdjust="spacing">1</text>
<text x="696.80" y="531.80" font-size="11.00" fill="#e4e2de" textLength="38.70" lengthAdjust="spacing">16-Jun-</text>
<text x="696.80" y="543.30" font-size="11.00" fill="#e4e2de" textLength="59.25" lengthAdjust="spacing">2012 02:00</text>
<text x="765.60" y="537.40" font-size="11.00" fill="#e4e2de" textLength="19.70" lengthAdjust="spacing">206</text>
</svg></body></html>
